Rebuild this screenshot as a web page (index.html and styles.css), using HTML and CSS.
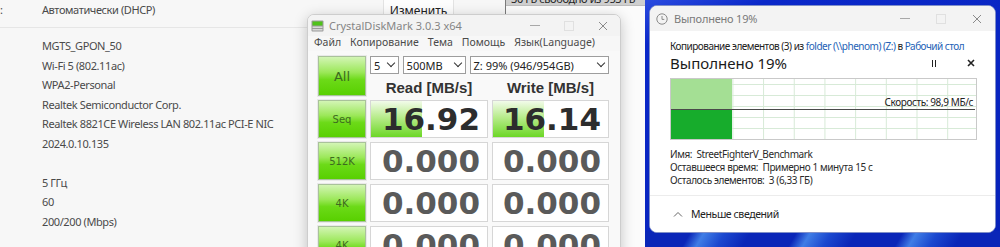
FILE: index.html
```html
<!DOCTYPE html>
<html lang="ru">
<head>
    <meta charset="UTF-8">
    <title>Network / CrystalDiskMark / Copy</title>
    <link rel="stylesheet" href="styles.css">
</head>
<body>
    <div class="screen">
        <section class="settings">
            <div class="settings-head">
                <span class="label">:</span>
                <span class="value">Автоматически (DHCP)</span>
            </div>
            <ul class="props">
                <li>MGTS_GPON_50</li>
                <li>Wi-Fi 5 (802.11ac)</li>
                <li>WPA2-Personal</li>
                <li>Realtek Semiconductor Corp.</li>
                <li>Realtek 8821CE Wireless LAN 802.11ac PCI-E NIC</li>
                <li>2024.0.10.135</li>
                <li class="blank"></li>
                <li>5 ГГц</li>
                <li>60</li>
                <li>200/200 (Mbps)</li>
            </ul>

            <div class="change-btn">Изменить</div>

            <div class="drive-pane">
                <div class="drive-bar"><span>30 ГБ свободно из 953 ГБ</span></div>
            </div>

            <div class="cdm">
                <div class="cdm-title">
                    <svg class="cdm-icon" width="13" height="12" viewBox="0 0 13 12">
                        <rect x="0.5" y="0.5" width="12" height="11" rx="1" fill="#9a9a9a"/>
                        <rect x="1.5" y="1.5" width="10" height="4" fill="#4fc21a"/>
                        <rect x="1.5" y="6.5" width="10" height="1.5" fill="#d8d8d8"/>
                        <rect x="1.5" y="9" width="10" height="1.5" fill="#d8d8d8"/>
                    </svg>
                    <span class="cdm-name">CrystalDiskMark 3.0.3 x64</span>
                    <div class="win-controls">
                        <span class="ctl ctl-min"></span>
                        <span class="ctl ctl-max"></span>
                        <span class="ctl ctl-close">
                            <svg width="10" height="10" viewBox="0 0 10 10"><path d="M1 1L9 9M9 1L1 9" stroke="#8a8a8a" stroke-width="1"/></svg>
                        </span>
                    </div>
                </div>
                <div class="cdm-menu">
                    <span>Файл</span>
                    <span>Копирование</span>
                    <span>Тема</span>
                    <span>Помощь</span>
                    <span>Язык(Language)</span>
                </div>
                <div class="cdm-body">
                    <div class="gbtn gbtn-all">All</div>
                    <div class="selects">
                        <div class="sel sel-count">5 <i></i></div>
                        <div class="sel sel-size">500MB <i></i></div>
                        <div class="sel sel-drive">Z: 99% (946/954GB) <i></i></div>
                    </div>
                    <div class="col-head">Read [MB/s]</div>
                    <div class="col-head">Write [MB/s]</div>

                    <div class="gbtn">Seq</div>
                    <div class="val val-done"><span class="bar" style="width:44%"></span><b>16.92</b></div>
                    <div class="val val-done"><span class="bar" style="width:44%"></span><b>16.14</b></div>

                    <div class="gbtn">512K</div>
                    <div class="val"><b>0.000</b></div>
                    <div class="val"><b>0.000</b></div>

                    <div class="gbtn">4K</div>
                    <div class="val"><b>0.000</b></div>
                    <div class="val"><b>0.000</b></div>

                    <div class="gbtn">4K</div>
                    <div class="val"><b>0.000</b></div>
                    <div class="val"><b>0.000</b></div>
                </div>
            </div>
        </section>

        <section class="desktop">
            <div class="copy">
                <div class="copy-title">
                    <svg class="clock" width="12" height="12" viewBox="0 0 12 12">
                        <circle cx="6" cy="6" r="5.2" fill="none" stroke="#8a8a8a" stroke-width="1"/>
                        <path d="M6 3V6.4H8.3" fill="none" stroke="#8a8a8a" stroke-width="1"/>
                    </svg>
                    <span class="copy-name">Выполнено 19%</span>
                    <div class="win-controls">
                        <span class="ctl ctl-min"></span>
                        <span class="ctl ctl-max"></span>
                        <span class="ctl ctl-close">
                            <svg width="10" height="10" viewBox="0 0 10 10"><path d="M1 1L9 9M9 1L1 9" stroke="#8a8a8a" stroke-width="1"/></svg>
                        </span>
                    </div>
                </div>
                <div class="copy-body">
                    <div class="copy-from">Копирование элементов (3) из <a>folder (\\phenom) (Z:)</a> в <a>Рабочий стол</a></div>
                    <div class="copy-progress">
                        <span class="pct">Выполнено 19%</span>
                        <span class="pause"></span>
                        <svg class="stop" width="8" height="8" viewBox="0 0 8 8"><path d="M1 1L7 7M7 1L1 7" stroke="#222" stroke-width="1.6"/></svg>
                    </div>
                    <div class="graph">
                        <span class="graph-done" style="width:61px"></span>
                        <span class="graph-speed" style="width:61px"></span>
                        <span class="speed-line"></span>
                        <span class="speed-label">Скорость: 98,9 МБ/с</span>
                    </div>
                    <div class="details">
                        <div>Имя:&nbsp; StreetFighterV_Benchmark</div>
                        <div>Оставшееся время:&nbsp; Примерно 1 минута 15 с</div>
                        <div>Осталось элементов:&nbsp; 3 (6,33 ГБ)</div>
                    </div>
                </div>
                <div class="copy-foot">
                    <svg width="10" height="6" viewBox="0 0 10 6"><path d="M1 5.5L5 1.5L9 5.5" fill="none" stroke="#666" stroke-width="1"/></svg>
                    <span>Меньше сведений</span>
                </div>
            </div>
        </section>
    </div>
</body>
</html>
```

FILE: styles.css
```css
body {
    margin: 0;
    width: 1000px;
    height: 247px;
    overflow: hidden;
    font-family: 'Noto Sans', 'Open Sans', sans-serif;
}
.screen {
    display: flex;
    height: 247px;
}

/* network settings page behind */
.settings {
    position: relative;
    width: 645px;
    background-color: #f7f7f7;
    color: #4a4a4a;
    font-size: 11px;
    letter-spacing: -0.4px;
}
.settings-head {
    display: flex;
    height: 27px;
    line-height: 20px;
    border-bottom: 1px solid #e6e6e6;
}
.settings-head .label {
    width: 42px;
}
.props {
    list-style: none;
    margin: 0;
    padding: 8px 0 0 42px;
}
.props li {
    height: 19.5px;
    line-height: 19.5px;
    white-space: nowrap;
}
.change-btn {
    position: absolute;
    left: 383px;
    top: -6px;
    width: 69px;
    height: 24px;
    line-height: 32px;
    text-align: center;
    background-color: #fdfdfd;
    border: 1px solid #e3e3e3;
    border-radius: 4px;
    color: #222;
    font-size: 12px;
    letter-spacing: 0;
}
.drive-pane {
    position: absolute;
    left: 505px;
    top: 0;
    width: 140px;
    height: 247px;
    background-color: #fbfbfb;
    border-left: 1px solid #7b7b7b;
}
.drive-bar {
    height: 5px;
    overflow: hidden;
    background-color: #cfcfcf;
    border-bottom: 1px solid #bdbdbd;
    font-size: 11px;
    color: #222;
}
.drive-bar span {
    display: block;
    margin-top: -8px;
    padding-left: 5px;
    line-height: 13px;
}

/* CrystalDiskMark */
.cdm {
    position: absolute;
    left: 307px;
    top: 14px;
    width: 312px;
    height: 250px;
    background-color: #f9f9f9;
    border: 1px solid #cdcdcd;
    border-radius: 7px 7px 0 0;
    box-shadow: 0 3px 14px rgba(0, 0, 0, 0.22);
    overflow: hidden;
    letter-spacing: 0;
}
.cdm-title {
    display: flex;
    align-items: center;
    height: 21px;
    padding-left: 3px;
    background-color: #f3f3f3;
}
.cdm-icon {
    margin-right: 5px;
}
.cdm-name {
    color: #858585;
    font-size: 11px;
}
.win-controls {
    display: flex;
    margin-left: auto;
    height: 100%;
}
.ctl {
    display: flex;
    align-items: center;
    justify-content: center;
    width: 34px;
    height: 100%;
}
.ctl-min::before {
    content: "";
    width: 10px;
    border-top: 1px solid #a8a8a8;
}
.ctl-max::before {
    content: "";
    width: 8px;
    height: 8px;
    border: 1px solid #e0e0e0;
}
.cdm-menu {
    display: flex;
    gap: 9px;
    height: 15px;
    line-height: 13px;
    padding-left: 6px;
    background-color: #f7f7f7;
    color: #4a4a4a;
    font-size: 10.5px;
}
.cdm-body {
    display: grid;
    grid-template-columns: 48px 118px 117px;
    grid-template-rows: 18px 18px 38px 38px 38px 38px;
    column-gap: 4px;
    row-gap: 4px;
    padding: 5px 0 0 10px;
}
.gbtn {
    display: flex;
    align-items: center;
    justify-content: center;
    border: 1px solid #a9c29a;
    box-shadow: 0 0 0 1px #e9e9e9;
    background: linear-gradient(#d3f5b5 0%, #9ce85a 40%, #6cda18 60%, #58d000 100%);
    color: #3d6a20;
    font-family: 'DejaVu Sans', sans-serif;
    font-size: 10px;
}
.gbtn-all {
    grid-row: span 2;
    font-size: 13px;
}
.selects {
    grid-column: span 2;
    display: flex;
    gap: 4px;
}
.sel {
    display: flex;
    align-items: center;
    height: 16px;
    padding: 0 4px 0 3px;
    border: 1px solid #9d9d9d;
    background-color: #fff;
    color: #222;
    font-size: 11px;
}
.sel i {
    margin-left: auto;
    width: 5px;
    height: 5px;
    margin-top: -4px;
    border-right: 1.5px solid #333;
    border-bottom: 1.5px solid #333;
    transform: rotate(45deg);
}
.sel-count { width: 20px; }
.sel-size { width: 55px; }
.sel-drive { width: 133px; }
.col-head {
    align-self: center;
    text-align: center;
    font-family: 'Liberation Sans', sans-serif;
    font-weight: bold;
    font-size: 15px;
    color: #333;
}
.val {
    position: relative;
    text-align: right;
    padding-right: 7px;
    border: 1px solid #d6d6d6;
    background-color: #fff;
    overflow: hidden;
}
.val b {
    position: relative;
    font-family: 'DejaVu Sans', sans-serif;
    font-size: 31px;
    line-height: 37px;
    color: #5a5a5a;
}
.val-done b {
    color: #2d2d2d;
}
.bar {
    position: absolute;
    left: 0;
    top: 0;
    bottom: 0;
    background: linear-gradient(#f2fbea 0%, #b8ec8c 45%, #6cd726 100%);
}

/* desktop with copy dialog */
.desktop {
    position: relative;
    flex: 1;
    background: linear-gradient(160deg, #2b4ce0 0%, #0a28c9 12%, #0722b8 100%);
}
.desktop::after {
    content: "";
    position: absolute;
    left: 0;
    right: 0;
    bottom: 0;
    height: 16px;
    background: repeating-linear-gradient(120deg, #0a26b8 0px, #0a26b8 40px, #3f7de6 52px, #1b48cf 70px, #0a26b8 92px);
}
.copy {
    position: absolute;
    left: 4px;
    top: 5px;
    width: 345px;
    height: 226px;
    background-color: #fff;
    border: 1px solid #7f8fc8;
    border-radius: 8px;
    overflow: hidden;
    z-index: 1;
    color: #222;
    font-size: 10px;
    letter-spacing: -0.4px;
    white-space: nowrap;
}
.copy-title {
    display: flex;
    align-items: center;
    height: 25px;
    padding-left: 6px;
    background-color: #f3f3f3;
}
.clock {
    margin-right: 6px;
}
.copy-name {
    color: #7a7a7a;
    font-size: 11px;
    letter-spacing: -0.2px;
}
.copy-title .ctl {
    width: 36px;
}
.copy-body {
    padding: 8px 18px 0 20px;
}
.copy-from {
    line-height: 15px;
    letter-spacing: -0.5px;
}
.copy-from a {
    color: #2462b6;
}
.copy-progress {
    display: flex;
    align-items: center;
    height: 18px;
}
.pct {
    font-size: 15px;
    color: #1a1a1a;
    letter-spacing: 0;
}
.pause {
    margin-left: auto;
    margin-right: 31px;
    width: 2px;
    height: 7px;
    border-left: 1.6px solid #222;
    border-right: 1.6px solid #222;
}
.stop {
    margin-right: 2px;
}
.graph {
    position: relative;
    margin-top: 6px;
    height: 60px;
    border: 1px solid #c9c9c9;
    background-color: #fff;
    background-image:
        linear-gradient(90deg, #d7ead7 1px, transparent 1px),
        linear-gradient(#d7ead7 1px, transparent 1px);
    background-size: 30.7px 100%, 100% 11px;
    background-position: 30.7px 0, 0 5px;
}
.graph span {
    position: absolute;
    left: 0;
}
.graph-done {
    top: 0;
    height: 30px;
    background-color: #a4df94;
}
.graph-speed {
    top: 31px;
    bottom: 0;
    background-color: #17ac2c;
}
.speed-line {
    top: 30px;
    right: 1px;
    border-top: 1px solid #4a4a4a;
}
.speed-label {
    top: 16px;
    right: 3px;
    left: auto !important;
    line-height: 14px;
}
.details {
    margin-top: 8px;
    line-height: 13px;
    color: #2a2a2a;
}
.copy-foot {
    position: absolute;
    left: 0;
    right: 0;
    bottom: 0;
    display: flex;
    align-items: center;
    gap: 8px;
    height: 36px;
    padding-left: 23px;
    border-top: 1px solid #ececec;
    background-color: #fff;
    font-size: 10.5px;
}
```
